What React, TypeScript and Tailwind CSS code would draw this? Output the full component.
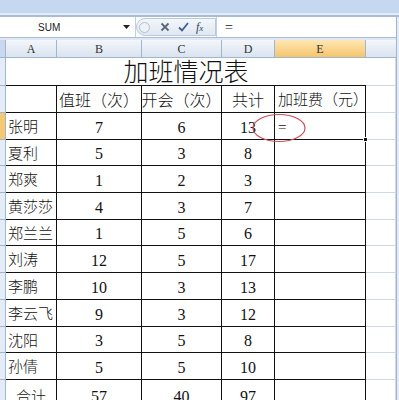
import React from "react";

const colWidths = [51, 85, 80, 53, 91];
const colNames = ["A", "B", "C", "D", "E"];

const rows: { name: string; vals: string[]; h: number }[] = [
  { name: "张明", vals: ["7", "6", "13", "="], h: 27 },
  { name: "夏利", vals: ["5", "3", "8", ""], h: 26 },
  { name: "郑爽", vals: ["1", "2", "3", ""], h: 27 },
  { name: "黄莎莎", vals: ["4", "3", "7", ""], h: 27 },
  { name: "郑兰兰", vals: ["1", "5", "6", ""], h: 26 },
  { name: "刘涛", vals: ["12", "5", "17", ""], h: 27 },
  { name: "李鹏", vals: ["10", "3", "13", ""], h: 27 },
  { name: "李云飞", vals: ["9", "3", "12", ""], h: 27 },
  { name: "沈阳", vals: ["3", "5", "8", ""], h: 26 },
  { name: "孙倩", vals: ["5", "5", "10", ""], h: 27 },
];

const RowHead = ({ active }: { active?: boolean }) => (
  <div
    className={`w-[6px] shrink-0 border-r border-b border-[#9eb6ce] ${
      active ? "bg-[#f5c875]" : "bg-[#e4ecf7]"
    }`}
  />
);

const FillerCells = () => (
  <>
    <div className="w-[30px] shrink-0 border-b border-r border-[#d0d7e5]" />
    <div className="flex-1 border-b border-[#d0d7e5]" />
  </>
);

const SheetRow = ({
  h,
  cells,
  active,
  centerFirst,
}: {
  h: number;
  cells: string[];
  active?: boolean;
  centerFirst?: boolean;
}) => (
  <div className="flex" style={{ height: h }}>
    <RowHead active={active} />
    {cells.map((c, i) => (
      <div
        key={i}
        className={`shrink-0 flex items-center pt-[3px] border-r border-b border-[#111] whitespace-nowrap overflow-visible font-light ${
          i === 0
            ? centerFirst
              ? "justify-center text-[15px]"
              : "pl-[2px] text-[15px]"
            : i === 4
              ? "pl-[3px] text-[15px]"
              : "justify-center text-[16px]"
        }`}
        style={{ width: colWidths[i] }}
      >
        {c}
      </div>
    ))}
    <FillerCells />
  </div>
);

export default function App() {
  return (
    <div className="w-[399px] h-[400px] overflow-hidden bg-white relative text-[#111] font-['Liberation_Serif','Noto_Sans_CJK_SC',serif]">
      {/* ribbon edge */}
      <div className="h-[13px] bg-[#c5d8ef]" />
      <div className="h-[2px] bg-[#e6eef9]" />
      <div className="h-[2px] bg-[#a9bcd5]" />

      {/* formula bar */}
      <div className="h-[21px] flex bg-white border-b border-[#a9bcd5]">
        <div className="w-[136px] shrink-0 flex items-center border-r border-[#c2cfdf]">
          <span className="pl-[38px] text-[10px] font-['Liberation_Sans',sans-serif] text-[#222]">
            SUM
          </span>
          <svg
            className="ml-auto mr-[5px]"
            width="7"
            height="4"
            viewBox="0 0 7 4"
          >
            <path d="M0 0h7L3.5 4z" fill="#222" />
          </svg>
        </div>
        <div className="w-[80px] shrink-0 flex items-center my-[1px] rounded-l-full bg-gradient-to-b from-[#f4f7fb] to-[#dfe7f1] border border-[#b9c9dd]">
          <div className="w-[11px] h-[11px] ml-[2px] rounded-full border border-[#b4c0cf] bg-[#eef2f7]" />
          <svg className="ml-[10px]" width="10" height="10" viewBox="0 0 10 10">
            <path
              d="M1.5 1.5l7 7M8.5 1.5l-7 7"
              stroke="#5b6778"
              strokeWidth="1.8"
            />
          </svg>
          <svg className="ml-[8px]" width="11" height="10" viewBox="0 0 11 10">
            <path
              d="M1 5.5l3 3L10 1"
              stroke="#3b5f8f"
              strokeWidth="1.8"
              fill="none"
            />
          </svg>
          <span className="ml-[7px] italic text-[12px] text-[#2e4566] font-['Liberation_Serif',serif]">
            f<span className="text-[9px]">x</span>
          </span>
        </div>
        <div className="flex-1 flex items-center pl-[8px] text-[14px] border-l border-[#c2cfdf]">
          =
        </div>
      </div>
      <div className="h-[2px] bg-[#dfe8f4]" />

      {/* column headers */}
      <div className="flex h-[18px]">
        <div className="w-[6px] shrink-0 bg-[#c9d8ec] border-r border-b border-[#9eb6ce]" />
        {colNames.map((c, i) => (
          <div
            key={c}
            className={`shrink-0 flex items-center justify-center text-[12px] text-[#333] border-r border-b border-[#9eb6ce] bg-gradient-to-b ${
              i === 4
                ? "from-[#fde7b2] to-[#f6c46c]"
                : "from-[#f3f6fb] to-[#dae3ef]"
            }`}
            style={{ width: colWidths[i] }}
          >
            {c}
          </div>
        ))}
        <div className="flex-1 border-b border-[#9eb6ce] bg-gradient-to-b from-[#f3f6fb] to-[#dae3ef]" />
      </div>

      {/* title row */}
      <div className="flex h-[28px]">
        <RowHead />
        <div className="w-[360px] shrink-0 flex items-center justify-center pt-[3px] text-[25px] font-light border-b border-[#111]">
          加班情况表
        </div>
        <FillerCells />
      </div>

      {/* header row */}
      <SheetRow
        h={27}
        cells={["", "值班（次）", "开会（次）", "共计", "加班费（元）"]}
      />

      {rows.map((r, i) => (
        <SheetRow key={r.name} h={r.h} cells={[r.name, ...r.vals]} active={i === 0} />
      ))}

      <SheetRow h={32} cells={["合计", "57", "40", "97", ""]} centerFirst />

      {/* window edge */}
      <div className="absolute top-[17px] right-0 w-[3px] h-[383px] bg-[#e4ebf4] border-l border-[#9eb6ce]" />

      {/* fill handle */}
      <div className="absolute left-[363px] top-[137px] w-[5px] h-[5px] bg-[#111] border border-white" />

      {/* red annotation ellipse */}
      <svg
        className="absolute left-[250px] top-[112px]"
        width="58"
        height="32"
        viewBox="0 0 58 32"
      >
        <ellipse
          cx="29"
          cy="16"
          rx="26"
          ry="13.5"
          fill="none"
          stroke="#c8505a"
          strokeWidth="1.2"
        />
      </svg>
    </div>
  );
}
